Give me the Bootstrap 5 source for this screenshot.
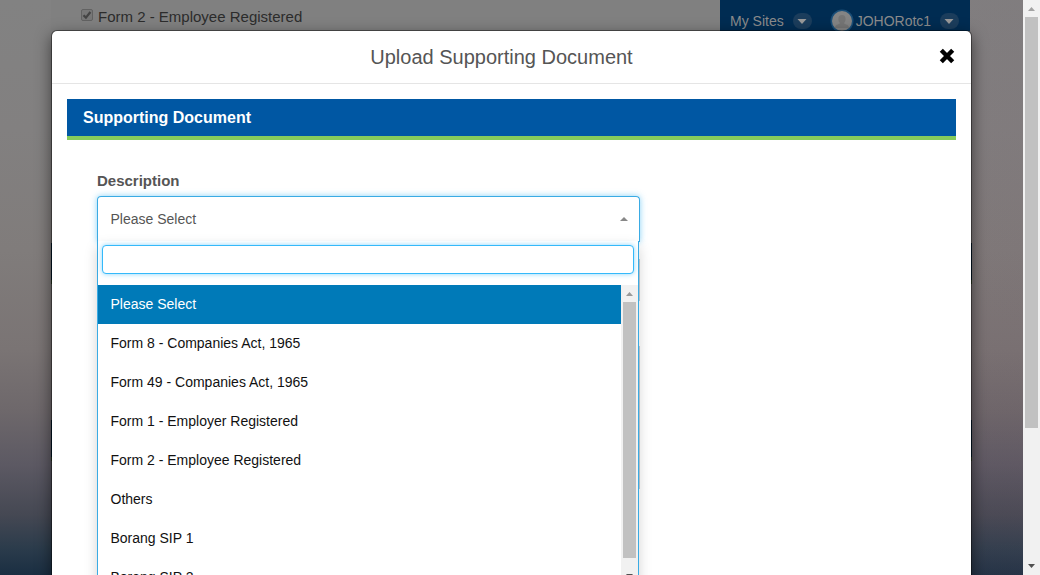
<!DOCTYPE html>
<html lang="en">
<head>
<meta charset="utf-8">
<title>Upload Supporting Document</title>
<link href="https://cdn.jsdelivr.net/npm/bootstrap@5.3.0/dist/css/bootstrap.min.css" rel="stylesheet">
<style>
body{font-family:"Liberation Sans",Arial,sans-serif;font-size:14px;line-height:20px;color:#555;height:575px;overflow:hidden}
.scene{background:linear-gradient(100deg,rgba(115,85,100,0) 55%,rgba(115,85,100,.14)),linear-gradient(#828282 0,#828080 130px,#807c7b 250px,#7a7474 350px,#6e686b 410px,#5c5963 465px,#454853 515px,#2a3b4b 550px,#1a2e42 575px)}
.sheet{left:51px;width:919px;height:31px;background:#808080;color:#2c2c2c}
.behind{left:51px;width:921px;height:41px;background:#001c33;border-bottom:4px solid #34482a}
.behind-first{top:243px}
.behind-second{top:420px}
.sheet-label{font-size:15px;left:47px;top:7px}
.tick{left:30px;top:9px;width:12px;height:12px}
.account{left:669px;width:250px;height:31px;background:#002c52;color:#8b8b8b;padding:11px 10px 0;line-height:20px}
.knob{width:19px;height:16px;margin:2px 0 0 9px;border-radius:8px;background:#1b3d5c}
.avatar{margin:-2px 2px 0 18px}
.dialog-box{left:51px;top:30px;width:921px;height:600px;background:#fff;background-clip:padding-box;border:1px solid rgba(0,0,0,.4);border-radius:6px;box-shadow:0 5px 15px rgba(0,0,0,.5)}
.dialog-head{height:53px;border-bottom:1px solid #e5e5e5}
.dialog-title{font-size:20px;line-height:24px;color:#555;padding-right:20px}
.shut{right:16px;top:17px;width:16px;height:16px}
.dialog-content{padding:15px}
.strip{height:41px;background:#0057a3;border-bottom:4px solid #85cb5c;color:#fff;font-size:16px;line-height:37px;padding-left:16px}
.field{padding:31px 30px 0}
.field-name{font-size:15px;line-height:20px;margin-bottom:5px;display:block}
.picker{width:543px;height:46px;border:1px solid #3aabe4;border-bottom:0;border-radius:4px 4px 0 0;box-shadow:0 0 6px rgba(58,180,240,.6);padding:0 11px 1px 12.500px}
.options{width:542px;height:400px;padding-top:4px;border:1px solid #3aabe4;border-top:0;background:#fff;box-shadow:0 6px 12px rgba(0,0,0,.175);position:relative;margin-top:-1px}
.query{display:block;margin:0 4px 11px;width:532px;height:29px;border:1px solid #34b9fa;border-radius:4px;box-shadow:0 0 5px rgba(60,185,250,.6);outline:0}
.covered{left:541px;width:1px;background:#b4bcc2}
.covered-first{top:18px;height:42px}
.covered-second{top:105px;height:143px}
.choice{height:39px;line-height:39px;padding-left:12.500px;color:#111}
.choice.chosen{background:#007ab8;color:#fff}
.rail{width:17px;background:#f1f1f1}
.grip{background:#c1c1c1;width:13px;margin:0 2px}
</style>
</head>
<body class="d-flex">
<main class="scene flex-grow-1 position-relative overflow-hidden">
  <div class="sheet position-absolute top-0">
    <svg class="tick position-absolute" viewBox="0 0 12 12"><rect x=".5" y=".5" width="11" height="11" rx="1.5" fill="#777" stroke="#626262"/><path d="M2.500 6.200 4.900 8.600 9.400 3" fill="none" stroke="#444" stroke-width="2.200"/></svg>
    <span class="sheet-label position-absolute text-nowrap">Form 2 - Employee Registered</span>
    <div class="account position-absolute top-0 d-flex align-items-start">
      <span>My Sites</span>
      <span class="knob"><svg class="d-block" width="19" height="16"><path d="M4.500 6h9L9 11z" fill="#999"/></svg></span>
      <svg width="24" height="24" class="avatar flex-shrink-0"><circle cx="12" cy="12" r="11.500" fill="#184d77"/><circle cx="12" cy="12" r="10" fill="#848484"/><path d="M12 6c-5 0-4 7-2 8-1 2-5 1-5 5h14c0-4-4-3-5-5 2-1 3-8-2-8z" fill="#757575"/></svg>
      <span>JOHORotc1</span>
      <span class="knob"><svg class="d-block" width="19" height="16"><path d="M4.500 6h9L9 11z" fill="#999"/></svg></span>
    </div>
  </div>
  <div class="behind behind-first position-absolute"></div>
  <div class="behind behind-second position-absolute"></div>
  <section class="dialog-box position-absolute">
    <header class="dialog-head position-relative d-flex align-items-center justify-content-center">
      <h1 class="dialog-title fw-normal m-0">Upload Supporting Document</h1>
      <svg class="shut position-absolute" viewBox="0 0 16 16"><path d="M2.300 2.300l11.400 11.400M13.700 2.300L2.300 13.700" stroke="#000" stroke-width="4.400"/></svg>
    </header>
    <div class="dialog-content">
      <div class="strip fw-bold">Supporting Document</div>
      <div class="field">
        <label class="field-name fw-bold">Description</label>
        <div class="picker d-flex align-items-center justify-content-between"><span>Please Select</span><svg width="8" height="4"><path d="M0 4h8L4 0z" fill="#888"/></svg></div>
        <div class="options">
          <i class="covered covered-first position-absolute"></i>
          <i class="covered covered-second position-absolute"></i>
          <input class="query" aria-label="Search">
          <div class="d-flex">
            <div class="flex-grow-1">
              <div class="choice chosen">Please Select</div>
              <div class="choice">Form 8 - Companies Act, 1965</div>
              <div class="choice">Form 49 - Companies Act, 1965</div>
              <div class="choice">Form 1 - Employer Registered</div>
              <div class="choice">Form 2 - Employee Registered</div>
              <div class="choice">Others</div>
              <div class="choice">Borang SIP 1</div>
              <div class="choice">Borang SIP 2</div>
            </div>
            <div class="rail"><svg class="d-block" width="17" height="17"><path d="M5 11h7L8.500 7z" fill="#999"/></svg><div class="grip" style="height:256px"></div><svg class="d-block" width="17" height="21"><path d="M5 16h7l-3.500 4z" fill="#505050"/></svg></div>
          </div>
        </div>
      </div>
    </div>
  </section>
</main>
<aside class="rail d-flex flex-column flex-shrink-0">
  <svg width="17" height="17"><path d="M5 11h7L8.500 7z" fill="#a3a3a3"/></svg>
  <div class="grip" style="height:411px"></div>
  <svg class="mt-auto" width="17" height="17"><path d="M5 6h7l-3.500 4z" fill="#505050"/></svg>
</aside>
<script src="https://cdn.jsdelivr.net/npm/bootstrap@5.3.0/dist/js/bootstrap.bundle.min.js"></script>
</body>
</html>
